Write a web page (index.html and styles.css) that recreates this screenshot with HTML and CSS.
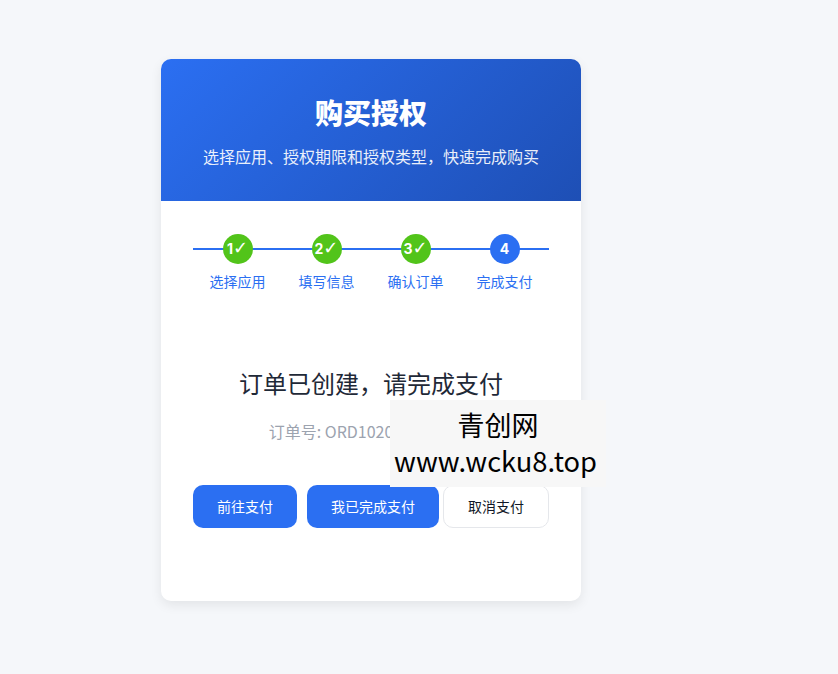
FILE: index.html
```html
<!DOCTYPE html>
<html lang="zh-CN">
<head>
    <meta charset="UTF-8">
    <meta name="viewport" content="width=device-width, initial-scale=1.0">
    <title>购买授权</title>
    <link rel="stylesheet" href="styles.css">
</head>
<body>
    <div class="card">
        <div class="card-header">
            <h1>购买授权</h1>
            <p>选择应用、授权期限和授权类型，快速完成购买</p>
        </div>
        <div class="card-body">
            <div class="steps">
                <div class="step">
                    <div class="step-num done">1<span class="check">✓</span></div>
                    <div class="step-label">选择应用</div>
                </div>
                <div class="step">
                    <div class="step-num done">2<span class="check">✓</span></div>
                    <div class="step-label">填写信息</div>
                </div>
                <div class="step">
                    <div class="step-num done">3<span class="check">✓</span></div>
                    <div class="step-label">确认订单</div>
                </div>
                <div class="step">
                    <div class="step-num">4</div>
                    <div class="step-label">完成支付</div>
                </div>
            </div>
            <div class="result">
                <h2>订单已创建，请完成支付</h2>
                <p class="order-no">订单号: ORD1020304050607</p>
                <div class="actions">
                    <button class="btn btn-primary btn-pay">前往支付</button>
                    <button class="btn btn-primary btn-done">我已完成支付</button>
                    <button class="btn btn-cancel">取消支付</button>
                </div>
            </div>
        </div>
    </div>
    <div class="watermark">
        <div>青创网</div>
        <div class="watermark-url">www.wcku8.top</div>
    </div>
</body>
</html>
```

FILE: styles.css
```css
* {
    box-sizing: border-box;
}

html, body {
    height: 100%;
}

body {
    margin: 0;
    padding: 59px 0 0 161px;
    background-color: #f5f7fa;
    font-family: "Noto Sans CJK SC", "Inter", sans-serif;
    overflow: hidden;
}

.card {
    width: 420px;
    height: 542px;
    background-color: white;
    border-radius: 10px;
    box-shadow: 0 4px 12px rgba(0, 0, 0, 0.08);
    overflow: hidden;
}

.card-header {
    height: 142px;
    padding-top: 34px;
    background: linear-gradient(135deg, #2b6ff2, #1e4fb5);
    color: white;
    text-align: center;
}

.card-header h1 {
    margin: 0;
    font-size: 28px;
    line-height: 38px;
    font-weight: 900;
}

.card-header p {
    margin: 13px 0 0;
    font-size: 16px;
    line-height: 24px;
    opacity: 0.9;
}

.card-body {
    padding: 32px;
}

.steps {
    position: relative;
    display: flex;
    justify-content: space-between;
    padding-top: 1px;
}

.steps::before {
    content: "";
    position: absolute;
    left: 0;
    right: 0;
    top: 15px;
    height: 2px;
    background-color: #2b6ff2;
}

.step {
    position: relative;
    flex: 1;
    display: flex;
    flex-direction: column;
    align-items: center;
}

.step-num {
    width: 30px;
    height: 30px;
    border-radius: 50%;
    background-color: #2b6ff2;
    color: white;
    font-family: "Inter", "Noto Sans CJK SC", sans-serif;
    font-size: 14px;
    font-weight: 700;
    line-height: 30px;
    text-align: center;
    white-space: nowrap;
}

.step-num.done {
    background-color: #52c41a;
}

.check {
    font-family: "DejaVu Sans", sans-serif;
    font-size: 18px;
    font-weight: 400;
    line-height: 0;
}

.step-label {
    margin-top: 7px;
    font-size: 14px;
    line-height: 20px;
    color: #2b6ff2;
}

.result {
    padding-top: 75px;
    text-align: center;
}

.result h2 {
    margin: 0;
    font-size: 24px;
    line-height: 34px;
    font-weight: 400;
    color: #1f2937;
}

.order-no {
    margin: 19px 0 0;
    font-size: 16px;
    line-height: 24px;
    color: #9ca3af;
}

.actions {
    display: flex;
    gap: 10px;
    margin-top: 42px;
}

.btn {
    height: 43px;
    padding: 0 0 2px;
    border: none;
    border-radius: 10px;
    font-family: inherit;
    font-size: 14px;
}

.btn-primary {
    background-color: #2b6ff2;
    color: white;
}

.btn-pay {
    width: 104px;
}

.btn-done {
    width: 132px;
}

.btn-cancel {
    width: 106px;
    margin-left: -6px;
    background-color: white;
    color: #111827;
    border: 1px solid #e5e7eb;
}

.watermark {
    position: absolute;
    left: 390px;
    top: 400px;
    width: 216px;
    height: 87px;
    background-color: #f7f7f7;
    color: black;
    font-size: 27px;
    line-height: 36px;
    text-align: center;
    padding-top: 7px;
}

.watermark-url {
    margin-right: 5px;
    font-size: 27.3px;
    line-height: 34px;
}
```
